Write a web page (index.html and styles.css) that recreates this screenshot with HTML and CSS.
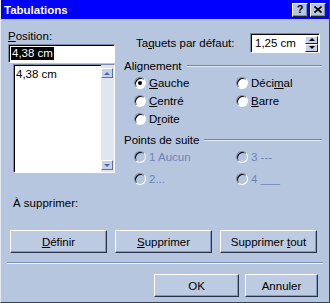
FILE: index.html
```html
<!DOCTYPE html>
<html lang="fr">

<head>
    <meta charset="UTF-8">
    <meta name="viewport" content="width=device-width, initial-scale=1.0">
    <link rel="stylesheet" href="styles.css">
    <title>Tabulations</title>
</head>

<body>
    <div class="dialog">
        <div class="titlebar">
            <span class="title">Tabulations</span>
            <div class="title-buttons">
                <span class="tbtn help">?</span>
                <span class="tbtn">
                    <svg width="8" height="7" viewBox="0 0 8 7">
                        <path d="M0.5 0.5 L7.5 6.5 M7.5 0.5 L0.5 6.5" stroke="#000" stroke-width="1.7" fill="none" />
                    </svg>
                </span>
            </div>
        </div>

        <div class="content">
            <div class="top">
                <div class="col-left">
                    <div class="label"><u>P</u>osition:</div>
                    <div class="field"><span class="selected">4,38 cm</span></div>
                    <div class="listbox">
                        <div class="list-items">
                            <div>4,38 cm</div>
                        </div>
                        <div class="scrollbar">
                            <span class="sbtn"><i class="arrow-up"></i></span>
                            <span class="sbtn"><i class="arrow-down"></i></span>
                        </div>
                    </div>
                </div>

                <div class="col-right">
                    <div class="default-row">
                        <span class="default-label">Ta<u>q</u>uets par défaut:</span>
                        <div class="spin">
                            <span class="spin-value">1,25 cm</span>
                            <div class="spin-buttons">
                                <span class="spin-btn"><i class="tri-up"></i></span>
                                <span class="spin-btn"><i class="tri-down"></i></span>
                            </div>
                        </div>
                    </div>

                    <div class="legend">Alignement</div>
                    <div class="radios">
                        <label class="opt"><span class="radio checked"></span><span><u>G</u>auche</span></label>
                        <label class="opt"><span class="radio"></span><span>Déci<u>m</u>al</span></label>
                        <label class="opt"><span class="radio"></span><span><u>C</u>entré</span></label>
                        <label class="opt"><span class="radio"></span><span><u>B</u>arre</span></label>
                        <label class="opt"><span class="radio"></span><span>D<u>r</u>oite</span></label>
                    </div>

                    <div class="legend leaders-legend">Points de suite</div>
                    <div class="radios leaders">
                        <label class="opt disabled"><span class="radio"></span><span>1 Aucun</span></label>
                        <label class="opt disabled"><span class="radio"></span><span>3 ---</span></label>
                        <label class="opt disabled"><span class="radio"></span><span>2...</span></label>
                        <label class="opt disabled"><span class="radio"></span><span>4 ___</span></label>
                    </div>
                </div>
            </div>

            <div class="delete-label">À supprimer:</div>

            <div class="actions">
                <button class="btn wide"><u>D</u>éfinir</button>
                <button class="btn wide"><u>S</u>upprimer</button>
                <button class="btn wide">Supprimer <u>t</u>out</button>
            </div>

            <div class="separator"></div>

            <div class="footer">
                <button class="btn ok">OK</button>
                <button class="btn cancel">Annuler</button>
            </div>
        </div>
    </div>
</body>

</html>
```

FILE: styles.css
```css
body {
    margin: 0;
    padding: 0;
    background-color: #b7c6df;
}

.dialog {
    width: 330px;
    height: 303px;
    box-sizing: border-box;
    overflow: hidden;
    background-color: #b7c6df;
    border-left: 1px solid #e4eaf5;
    border-right: 1px solid #36425c;
    border-bottom: 1px solid #36425c;
    font-family: 'Liberation Sans', Arial, sans-serif;
    font-size: 11.5px;
    color: #000;
}

u {
    text-underline-offset: 1px;
}

/* title bar */
.titlebar {
    height: 19px;
    background-color: #0000ff;
    display: flex;
    align-items: center;
    justify-content: space-between;
    padding: 0 3px 0 3px;
}

.title {
    color: #fff;
    font-weight: bold;
    font-size: 11.5px;
}

.title-buttons {
    display: flex;
    gap: 2px;
}

.tbtn {
    width: 16px;
    height: 14px;
    box-sizing: border-box;
    background-color: #b7c6df;
    border: 1px solid;
    border-color: #fff #1c2438 #1c2438 #fff;
    box-shadow: inset -1px -1px #7b8db0;
    display: flex;
    align-items: center;
    justify-content: center;
    font-weight: bold;
    font-size: 11px;
    line-height: 1;
}

/* body */
.content {
    padding-left: 7px;
}

.top {
    display: flex;
    gap: 9px;
    padding-top: 10px;
}

.col-left {
    width: 107px;
}

.label {
    height: 14px;
    line-height: 14px;
}

.field {
    margin-top: 1px;
    height: 19px;
    box-sizing: border-box;
    background-color: #fff;
    border: 1px solid;
    border-color: #7a8aa8 #fff #fff #7a8aa8;
    box-shadow: inset 1px 1px #000;
    display: flex;
    align-items: center;
    padding-left: 2px;
}

.selected {
    background-color: #000;
    color: #fff;
    line-height: 13px;
    padding: 0 1px;
}

.listbox {
    margin-top: 1px;
    margin-left: 5px;
    width: 102px;
    height: 109px;
    box-sizing: border-box;
    background-color: #fff;
    border: 1px solid;
    border-color: #7a8aa8 #fff #fff #7a8aa8;
    box-shadow: inset 1px 1px #000;
    display: flex;
}

.list-items {
    flex: 1;
    padding: 2px 0 0 2px;
    line-height: 14px;
}

.scrollbar {
    width: 13px;
    background-color: #dfe6f2;
    display: flex;
    flex-direction: column;
    justify-content: space-between;
    padding: 3px 1px 2px 0;
    box-sizing: border-box;
}

.sbtn {
    height: 10px;
    box-sizing: border-box;
    background-color: #c5d2e8;
    border: 1px solid;
    border-color: #fff #5f729c #5f729c #fff;
    display: flex;
    align-items: center;
    justify-content: center;
}

.arrow-up,
.arrow-down,
.tri-up,
.tri-down {
    width: 0;
    height: 0;
    border-left: 3px solid transparent;
    border-right: 3px solid transparent;
}

.arrow-up {
    border-bottom: 3px solid #4f6aa3;
}

.arrow-down {
    border-top: 3px solid #4f6aa3;
}

/* right column */
.col-right {
    width: 198px;
}

.default-row {
    margin-top: 4px;
    height: 20px;
    display: flex;
    align-items: center;
}

.default-label {
    margin-left: 12px;
}

.spin {
    margin-left: auto;
    margin-right: 2px;
    width: 70px;
    height: 20px;
    box-sizing: border-box;
    background-color: #fff;
    border: 1px solid;
    border-color: #7a8aa8 #fff #fff #7a8aa8;
    box-shadow: inset 1px 1px #000;
    display: flex;
    align-items: center;
    padding-left: 4px;
}

.spin-value {
    flex: 1;
}

.spin-buttons {
    width: 13px;
    height: 16px;
    margin-right: 1px;
    margin-top: 1px;
    display: flex;
    flex-direction: column;
}

.spin-btn {
    flex: 1;
    box-sizing: border-box;
    background-color: #c5d2e8;
    border: 1px solid;
    border-color: #fff #1c2438 #1c2438 #fff;
    display: flex;
    align-items: center;
    justify-content: center;
}

.tri-up {
    border-bottom: 3px solid #000;
}

.tri-down {
    border-top: 3px solid #000;
}

.legend {
    margin-top: 6px;
    height: 14px;
    display: flex;
    align-items: center;
}

.legend::after {
    content: "";
    flex: 1;
    margin-left: 5px;
    border-top: 1px solid #6c84b6;
    border-bottom: 1px solid #e2e9f5;
}

.leaders-legend {
    margin-top: 5px;
    height: 13px;
}

.radios {
    display: grid;
    grid-template-columns: 102px 1fr;
    padding-left: 10px;
    margin-top: 1px;
}

.leaders {
    margin-top: 0;
}

.opt {
    height: 18px;
    display: flex;
    align-items: center;
    gap: 3px;
}

.leaders .opt {
    height: 22px;
}

.radio {
    width: 12px;
    height: 12px;
    box-sizing: border-box;
    border-radius: 50%;
    border: 1px solid;
    border-color: #7a8aa8 #fff #fff #7a8aa8;
    box-shadow: inset 1px 1px #000;
    background-color: #fff;
    display: flex;
    align-items: center;
    justify-content: center;
}

.radio.checked::after {
    content: "";
    width: 4px;
    height: 4px;
    border-radius: 50%;
    background-color: #000;
}

.opt.disabled {
    color: #6b84b8;
}

.opt.disabled .radio {
    background-color: transparent;
}

.delete-label {
    margin-top: 6px;
    padding-left: 5px;
    line-height: 14px;
}

/* buttons */
.actions {
    margin-top: 20px;
    padding-left: 2px;
    display: flex;
    gap: 8px;
}

.btn {
    height: 23px;
    box-sizing: border-box;
    padding: 0;
    background-color: #bccae2;
    border: 1px solid;
    border-color: #fff #28324a #28324a #fff;
    box-shadow: inset -1px -1px #8698bd;
    font-family: inherit;
    font-size: inherit;
    color: #000;
}

.wide {
    width: 97px;
}

.separator {
    margin-top: 9px;
    margin-left: -1px;
    width: 316px;
    border-top: 1px solid #7b8fb8;
    border-bottom: 1px solid #eef2f9;
}

.footer {
    margin-top: 10px;
    padding-left: 146px;
    display: flex;
    gap: 6px;
}

.ok {
    width: 85px;
}

.cancel {
    width: 73px;
}
```
